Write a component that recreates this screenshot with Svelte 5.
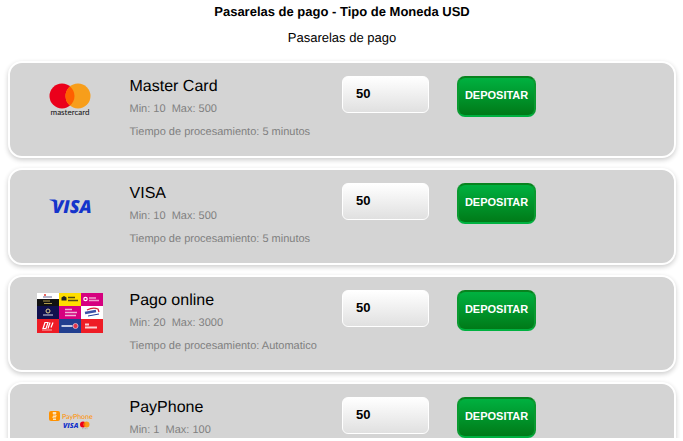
<script>
  let gateways = [
    { id: 'mastercard', name: 'Master Card', min: 10, max: 500, time: '5 minutos', amount: '50' },
    { id: 'visa', name: 'VISA', min: 10, max: 500, time: '5 minutos', amount: '50' },
    { id: 'online', name: 'Pago online', min: 20, max: 3000, time: 'Automatico', amount: '50' },
    { id: 'payphone', name: 'PayPhone', min: 1, max: 100, time: 'Automatico', amount: '50' }
  ];
</script>

<main class="page">
  <h1>Pasarelas de pago - Tipo de Moneda USD</h1>
  <p class="subtitle">Pasarelas de pago</p>

  {#each gateways as gw (gw.id)}
    <form class="card" on:submit|preventDefault>
      <div class="logo">
        {#if gw.id === 'mastercard'}
          <svg width="66" height="40" viewBox="0 0 66 40" aria-hidden="true">
            <circle cx="25" cy="17" r="12.5" fill="#eb001b" />
            <circle cx="41" cy="17" r="12.5" fill="#f79e1b" />
            <path d="M33 7.400a12.5 12.5 0 0 1 0 19.200a12.5 12.5 0 0 1 0-19.200z" fill="#ff5f00" />
            <text x="33" y="36" font-size="8" text-anchor="middle" fill="#111" class="round">mastercard</text>
          </svg>
        {:else if gw.id === 'visa'}
          <svg width="66" height="40" viewBox="0 0 66 40" aria-hidden="true">
            <path d="M12.5 13.500h6l2 6c-2-3-4.500-4.500-8-5.500z" fill="#1434cb" />
            <text x="35" y="27" font-size="18" text-anchor="middle" fill="#1434cb" class="visa">VISA</text>
          </svg>
        {:else if gw.id === 'online'}
          <svg width="66" height="40" viewBox="0 0 66 40" aria-hidden="true">
            <rect width="66" height="40" fill="#fff" />
            <rect y="6" width="22" height="7" fill="#111" />
            <rect x="22" width="22" height="13" fill="#fd0" />
            <rect x="44" width="22" height="13" fill="#d6007f" />
            <rect y="13" width="22" height="13" fill="#10104e" />
            <rect x="22" y="13" width="22" height="13" fill="#d6007f" />
            <rect y="26" width="22" height="14" fill="#ee1c25" />
            <rect x="22" y="26" width="22" height="14" fill="#213f8f" />
            <rect x="44" y="26" width="22" height="14" fill="#ee1c25" />
            <circle cx="8" cy="2" r="1" fill="#e5352b" />
            <path d="M6 4h9" stroke="#88a" stroke-width="1.300" />
            <path d="M6 8h7M7 10.500h8" stroke="#b09a4a" stroke-width="1" />
            <path d="M24.500 4.500l2.500-1.500 2.500 1.500v3h-5z" fill="#222" />
            <path d="M31 4.500h7M31 7.500h10" stroke="#554a10" stroke-width="1.500" />
            <circle cx="48.500" cy="6" r="1.700" fill="none" stroke="#fff" stroke-width="1.200" />
            <path d="M52 5h7M52 7.500h10" stroke="#f0a0cc" stroke-width="1.300" />
            <circle cx="11" cy="18" r="2" fill="none" stroke="#e6d58c" />
            <path d="M6 22h10" stroke="#aaaac8" stroke-width="1.300" />
            <path d="M28 16.500h7M28 19.500h12M28 22.500h11" stroke="#f0b0d6" stroke-width="1.400" />
            <path d="M50 17q6-3 11-1l1 3" fill="none" stroke="#d71f35" stroke-width="1.300" />
            <path d="M48 20l11-2" stroke="#3a50a8" stroke-width="2.500" />
            <path d="M51 23l11-2" stroke="#203a9b" stroke-width="1" />
            <path d="M8 29.500l-2 6h3l2-6zM13 29.500l-2 6M16 29.500l-2 5" fill="none" stroke="#fff" stroke-width="1.200" />
            <path d="M5 37h10" stroke="#f8b0b0" stroke-width="1" />
            <path d="M24.500 33h11" stroke="#c4cce4" stroke-width="2" />
            <circle cx="38.500" cy="33" r="2.500" fill="#e73348" stroke="#d9a6bb" stroke-width="1" />
            <path d="M48 31.500h4M48 34.500h12" stroke="#fbd0d2" stroke-width="2" />
          </svg>
        {:else}
          <svg width="66" height="40" viewBox="0 0 66 40" aria-hidden="true">
            <rect x="12" y="11" width="11" height="10" rx="2" fill="#ff9100" />
            <path d="M16 12.500h3v1h-3zM16 15h3v1.500h-3v1.500h3M16 19.500h3" fill="none" stroke="#fde3bd" stroke-width="1" />
            <text x="25" y="19" font-size="7" fill="#ff9100" class="round">PayPhone</text>
            <text x="26" y="28" font-size="7" fill="#1434cb" class="visa">VISA</text>
            <circle cx="46" cy="24.500" r="3" fill="#eb001b" />
            <circle cx="49.500" cy="24.500" r="3" fill="#f79e1b" />
            <path d="M47.700 22.500v4" stroke="#ff5f00" />
            <path d="M45 28.700h6" stroke="#888" stroke-width="0.500" stroke-dasharray="1 0.500" />
          </svg>
        {/if}
      </div>

      <div class="info">
        <h2>{gw.name}</h2>
        <p>Min: {gw.min}&nbsp; Max: {gw.max}</p>
        <p>Tiempo de procesamiento: {gw.time}</p>
      </div>

      <div class="amount">
        <input type="text" inputmode="decimal" aria-label="Monto {gw.name}" bind:value={gw.amount} />
      </div>

      <div class="action">
        <button type="submit">DEPOSITAR</button>
      </div>
    </form>
  {/each}
</main>

<style>
  :global(body) {
    background: #fff;
    overflow: hidden;
  }

  .page {
    box-sizing: border-box;
    height: calc(100vh - 3px);
    overflow: hidden;
    padding: 4px 7px 0 8px;
    font-family: "Liberation Sans", Arial, sans-serif;
    color: #000;
    text-rendering: geometricPrecision;
  }

  h1,
  .subtitle {
    margin: 0 0 10px;
    font-size: 13px;
    line-height: 16px;
    text-align: center;
  }

  .subtitle {
    margin-bottom: 15px;
  }

  .card {
    display: grid;
    grid-template-columns: 54fr 96fr 52fr 98fr;
    box-sizing: border-box;
    min-height: 97px;
    margin-bottom: 10px;
    padding: 13px 0 12px;
    background: #d4d4d4;
    border: 2px solid #fff;
    border-radius: 14px;
    box-shadow: 0 2px 5px rgba(0, 0, 0, 0.2);
  }

  .logo {
    display: flex;
    justify-content: center;
    padding-top: 3px;
  }

  .logo svg {
    display: block;
  }

  .round {
    font-family: Lato, sans-serif;
  }

  .visa {
    font-family: "Open Sans", sans-serif;
    font-weight: 800;
    font-style: italic;
  }

  h2 {
    margin: 0;
    font-size: 16px;
    font-weight: 400;
    line-height: 22px;
  }

  .info p {
    margin: 0;
    font-size: 11px;
    line-height: 23px;
    color: #808080;
  }

  input {
    box-sizing: border-box;
    display: block;
    width: 87px;
    height: 37px;
    padding: 0 13px 2px;
    border: 1px solid #fff;
    border-radius: 6px;
    background: linear-gradient(#fff, #e0e0e0);
    font: bold 13px "Liberation Sans", Arial, sans-serif;
    color: #000;
  }

  button {
    box-sizing: border-box;
    display: block;
    width: 79px;
    height: 41px;
    padding: 0 0 3px;
    border: 2px solid;
    border-color: #08831f #0a9a30 #00b140;
    border-radius: 8px;
    background: linear-gradient(#00b140, #007a18);
    color: #fff;
    font: bold 11px "Liberation Sans", Arial, sans-serif;
    cursor: pointer;
  }
</style>
